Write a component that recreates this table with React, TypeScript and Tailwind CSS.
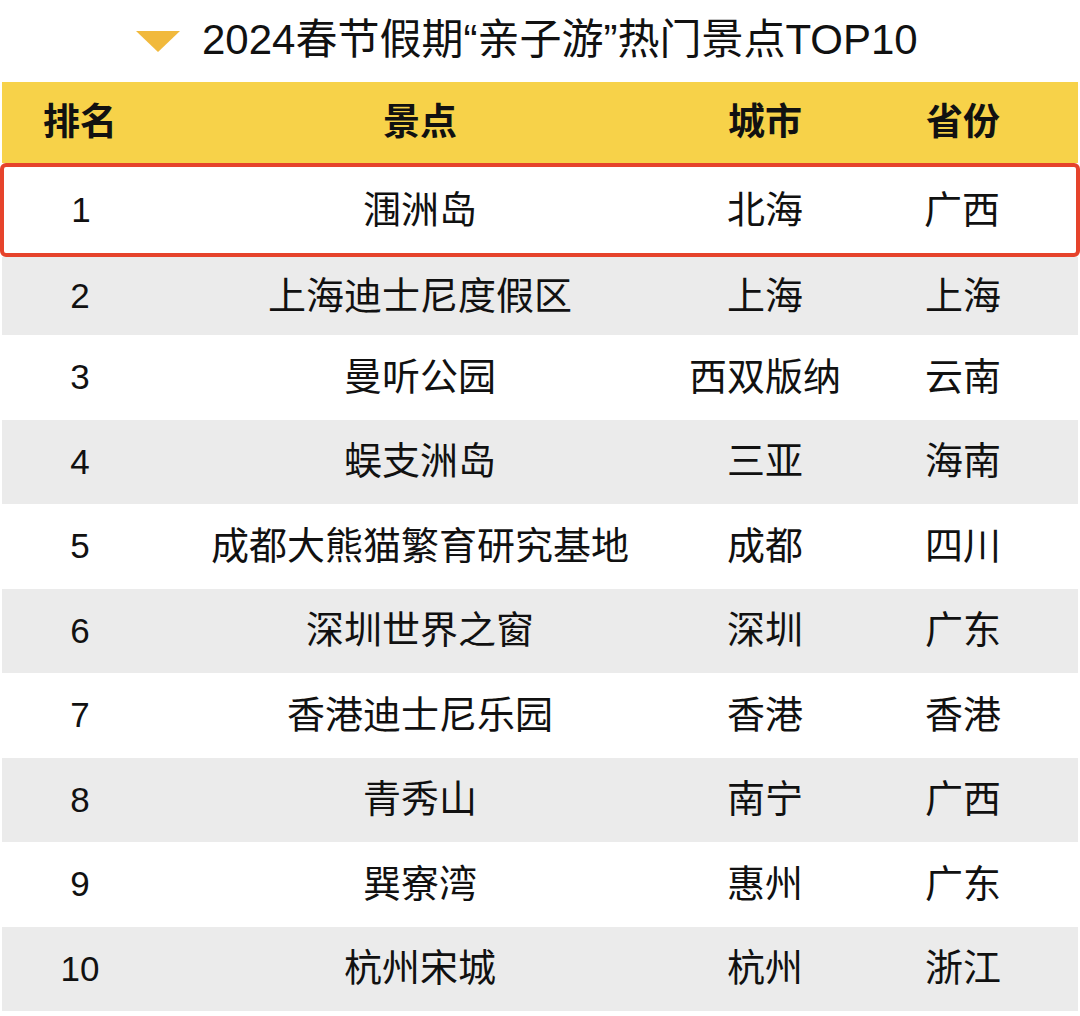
const rows = [
  { rank: "1", spot: "涠洲岛", city: "北海", prov: "广西" },
  { rank: "2", spot: "上海迪士尼度假区", city: "上海", prov: "上海" },
  { rank: "3", spot: "曼听公园", city: "西双版纳", prov: "云南" },
  { rank: "4", spot: "蜈支洲岛", city: "三亚", prov: "海南" },
  { rank: "5", spot: "成都大熊猫繁育研究基地", city: "成都", prov: "四川" },
  { rank: "6", spot: "深圳世界之窗", city: "深圳", prov: "广东" },
  { rank: "7", spot: "香港迪士尼乐园", city: "香港", prov: "香港" },
  { rank: "8", spot: "青秀山", city: "南宁", prov: "广西" },
  { rank: "9", spot: "巽寮湾", city: "惠州", prov: "广东" },
  { rank: "10", spot: "杭州宋城", city: "杭州", prov: "浙江" },
]

const cols = "grid grid-cols-[156px_524px_166px_1fr] items-center"

export default function App() {
  return (
    <div
      className="w-[1080px] h-[1016px] bg-white text-[#111] overflow-hidden"
      style={{ fontFamily: '"Liberation Sans", "Noto Sans CJK SC", sans-serif' }}
    >
      {/* Title */}
      <div className="h-[82px] flex items-center pl-[136px] gap-[22px]">
        <svg width="44" height="21" viewBox="0 0 44 21">
          <path d="M0 0 H44 L22 21 Z" fill="#f1b93c" />
        </svg>
        <h1 className="text-[42px] leading-none pb-[2px] whitespace-nowrap">
          2024春节假期“亲子游”热门景点TOP10
        </h1>
      </div>

      {/* Header */}
      <div className={`${cols} h-[81px] mx-[2px] bg-[#f7d249] text-[37px] font-bold`}>
        <div className="text-center">排名</div>
        <div className="text-center">景点</div>
        <div className="text-center">城市</div>
        <div className="text-center">省份</div>
      </div>

      {/* Rows */}
      <div className="flex flex-col text-[38px]">
        {rows.map((r, i) => {
          const first = i === 0
          const gray = i % 2 === 1
          const h = first ? "h-[94px]" : i === 1 ? "h-[78px]" : "h-[84.5px]"
          return (
            <div
              key={r.rank}
              className={`${h} ${
                first
                  ? "grid grid-cols-[154px_524px_166px_1fr] items-center mx-0 border-4 border-[#e6432b] rounded-[6px]"
                  : `${cols} mx-[2px]`
              } ${gray ? "bg-[#ebebeb]" : "bg-white"}`}
            >
              <div className="text-center text-[35px]">{r.rank}</div>
              <div className="text-center">{r.spot}</div>
              <div className="text-center">{r.city}</div>
              <div className="text-center">{r.prov}</div>
            </div>
          )
        })}
      </div>
    </div>
  )
}
